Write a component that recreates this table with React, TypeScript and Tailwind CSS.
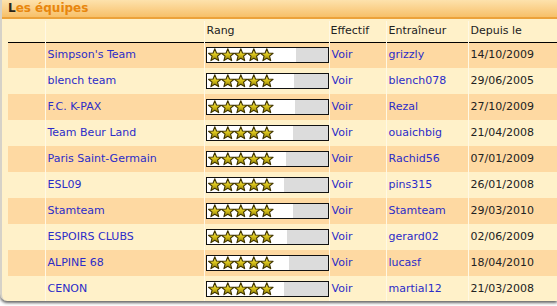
import React from "react";

const teams = [
  { name: "Simpson's Team", coach: "grizzly", since: "14/10/2009", fill: 89 },
  { name: "blench team", coach: "blench078", since: "29/06/2005", fill: 87 },
  { name: "F.C. K-PAX", coach: "Rezal", since: "27/10/2009", fill: 88 },
  { name: "Team Beur Land", coach: "ouaichbig", since: "21/04/2008", fill: 86 },
  { name: "Paris Saint-Germain", coach: "Rachid56", since: "07/01/2009", fill: 79 },
  { name: "ESL09", coach: "pins315", since: "26/01/2008", fill: 77 },
  { name: "Stamteam", coach: "Stamteam", since: "29/03/2010", fill: 86 },
  { name: "ESPOIRS CLUBS", coach: "gerard02", since: "02/06/2009", fill: 80 },
  { name: "ALPINE 68", coach: "lucasf", since: "18/04/2010", fill: 82 },
  { name: "CENON", coach: "martial12", since: "21/03/2008", fill: 77 },
];

function Stars() {
  const pts = (cx: number) => {
    const out: string[] = [];
    for (let i = 0; i < 10; i++) {
      const r = i % 2 === 0 ? 6.6 : 2.9;
      const a = -Math.PI / 2 + (i * Math.PI) / 5;
      out.push(`${(cx + r * Math.cos(a)).toFixed(2)},${(7.3 + r * Math.sin(a)).toFixed(2)}`);
    }
    return out.join(" ");
  };
  return (
    <svg width="66" height="14" viewBox="0 0 66 14" className="absolute left-[1px] top-0">
      <defs>
        <linearGradient id="gold" x1="0" y1="0" x2="0" y2="1">
          <stop offset="0" stopColor="#fbef6a" />
          <stop offset="0.5" stopColor="#d8c21a" />
          <stop offset="1" stopColor="#8a7a06" />
        </linearGradient>
      </defs>
      {[0, 1, 2, 3, 4].map((i) => (
        <polygon key={i} points={pts(6.8 + i * 13)} fill="url(#gold)" stroke="#3e3300" strokeWidth="1.1" strokeLinejoin="round" />
      ))}
    </svg>
  );
}

function RatingBar({ fill }: { fill: number }) {
  return (
    <div className="relative w-[123px] h-[16px] border border-[#111] bg-[#dcdcdc]">
      <div className="h-full bg-white" style={{ width: fill }} />
      <Stars />
    </div>
  );
}

export default function App() {
  return (
    <div className="w-[557px] h-[306px] bg-white overflow-hidden font-['DejaVu_Sans',Verdana,sans-serif] text-[11px] text-[#222]">
      <div className="h-[301px] bg-[#fff1c9] border-l-2 border-[#d6d2c8] rounded-bl-[7px] shadow-[0_2px_3px_rgba(0,0,0,0.6)] overflow-hidden">
        <div className="h-[19px] bg-gradient-to-b from-[#fde2ac] to-[#f7c068] border-b-2 border-[#eca23a] pl-[6px] leading-[17px]">
          <span className="text-[12px] font-bold text-[#2a2418]">L</span>
          <span className="text-[12px] font-bold text-[#e8860c]">es équipes</span>
        </div>
        <div className="pl-[6px] pt-[2px]">
          <table className="w-[549px] border-collapse table-fixed">
            <colgroup>
              <col className="w-[37px]" />
              <col className="w-[159px]" />
              <col className="w-[125px]" />
              <col className="w-[57px]" />
              <col className="w-[82px]" />
              <col />
            </colgroup>
            <thead>
              <tr className="h-[21px] border-b border-black">
                <th className="border-r border-[#fff8e4]" />
                <th className="border-r border-[#fff8e4]" />
                <th className="border-r border-[#fff8e4] text-left font-normal pl-[2px]">Rang</th>
                <th className="border-r border-[#fff8e4] text-left font-normal pl-[1px]">Effectif</th>
                <th className="border-r border-[#fff8e4] text-left font-normal pl-[2px]">Entraîneur</th>
                <th className="text-left font-normal pl-[2px]">Depuis le</th>
              </tr>
            </thead>
            <tbody>
              {teams.map((t, i) => (
                <tr key={t.name} className={`h-[26px] ${i % 2 === 0 ? "bg-[#fed9a2]" : "bg-[#fff1c9]"}`}>
                  <td className="border-r border-[#fff8e4]" />
                  <td className="border-r border-[#fff8e4] pl-[2px] text-[#2c2cc8]">{t.name}</td>
                  <td className="border-r border-[#fff8e4] pl-[1px]">
                    <RatingBar fill={t.fill} />
                  </td>
                  <td className="border-r border-[#fff8e4] pl-[2px] text-[#2c2cc8]">Voir</td>
                  <td className="border-r border-[#fff8e4] pl-[2px] text-[#2c2cc8]">{t.coach}</td>
                  <td className="pl-[2px]">{t.since}</td>
                </tr>
              ))}
            </tbody>
          </table>
        </div>
      </div>
    </div>
  );
}
